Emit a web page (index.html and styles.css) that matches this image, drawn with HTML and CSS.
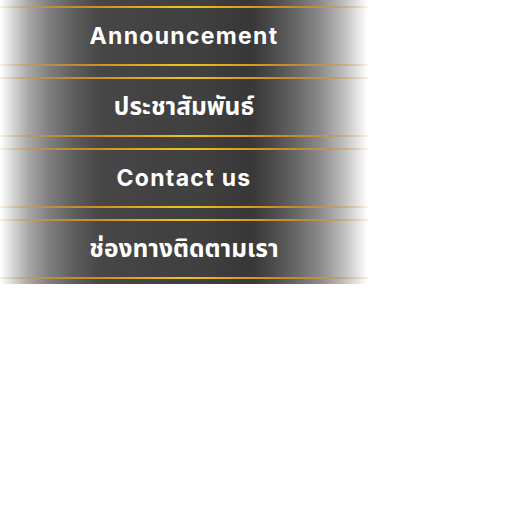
FILE: index.html
```html
<!DOCTYPE html>
<html lang="th">
<head>
<meta charset="utf-8">
<link rel="stylesheet" href="styles.css">
</head>
<body>
<nav class="menu">
  <a class="btn" href="#">Announcement</a>
  <a class="btn btn-th" href="#">ประชาสัมพันธ์</a>
  <a class="btn" href="#">Contact us</a>
  <a class="btn btn-th" href="#">ช่องทางติดตามเรา</a>
</nav>
</body>
</html>
```
FILE: styles.css
```css
html, body {
  margin: 0;
  padding: 0;
  background: #ffffff;
}
.menu {
  display: flex;
  flex-direction: column;
  width: 368px;
}
.btn {
  position: relative;
  display: flex;
  align-items: center;
  justify-content: center;
  height: 71px;
  box-sizing: border-box;
  padding-top: 1px;
  text-decoration: none;
  color: #ffffff;
  font-family: "Inter", "Noto Sans Thai", "Noto Sans", sans-serif;
  font-weight: 700;
  font-size: 23px;
  letter-spacing: 1.3px;
  background: linear-gradient(to right,
    #ffffff 0px,
    #a8a8a8 28px,
    #808080 48px,
    #5c5c5c 75px,
    #474747 100px,
    #424242 150px,
    #404040 200px,
    #3a3a3a 235px,
    #383838 252px,
    #4a4a4a 272px,
    #666666 295px,
    #8a8a8a 320px,
    #bdbdbd 343px,
    #ffffff 368px);
}
.btn-th {
  font-size: 24.5px;
  letter-spacing: 0;
  font-weight: 700;
}
.btn::before,
.btn::after {
  content: "";
  position: absolute;
  left: 0;
  right: 0;
  height: 2px;
  background: linear-gradient(to right,
    rgba(215, 180, 120, 0.15) 0%,
    rgba(200, 150, 70, 0.7) 10%,
    #cf8d22 25%,
    #e2ad1c 40%,
    #f1c21e 50%,
    #e2ad1c 60%,
    #cf8d22 75%,
    rgba(200, 150, 70, 0.7) 90%,
    rgba(215, 180, 120, 0.15) 100%);
}
.btn::before {
  top: 6px;
}
.btn::after {
  bottom: 5px;
}
```
